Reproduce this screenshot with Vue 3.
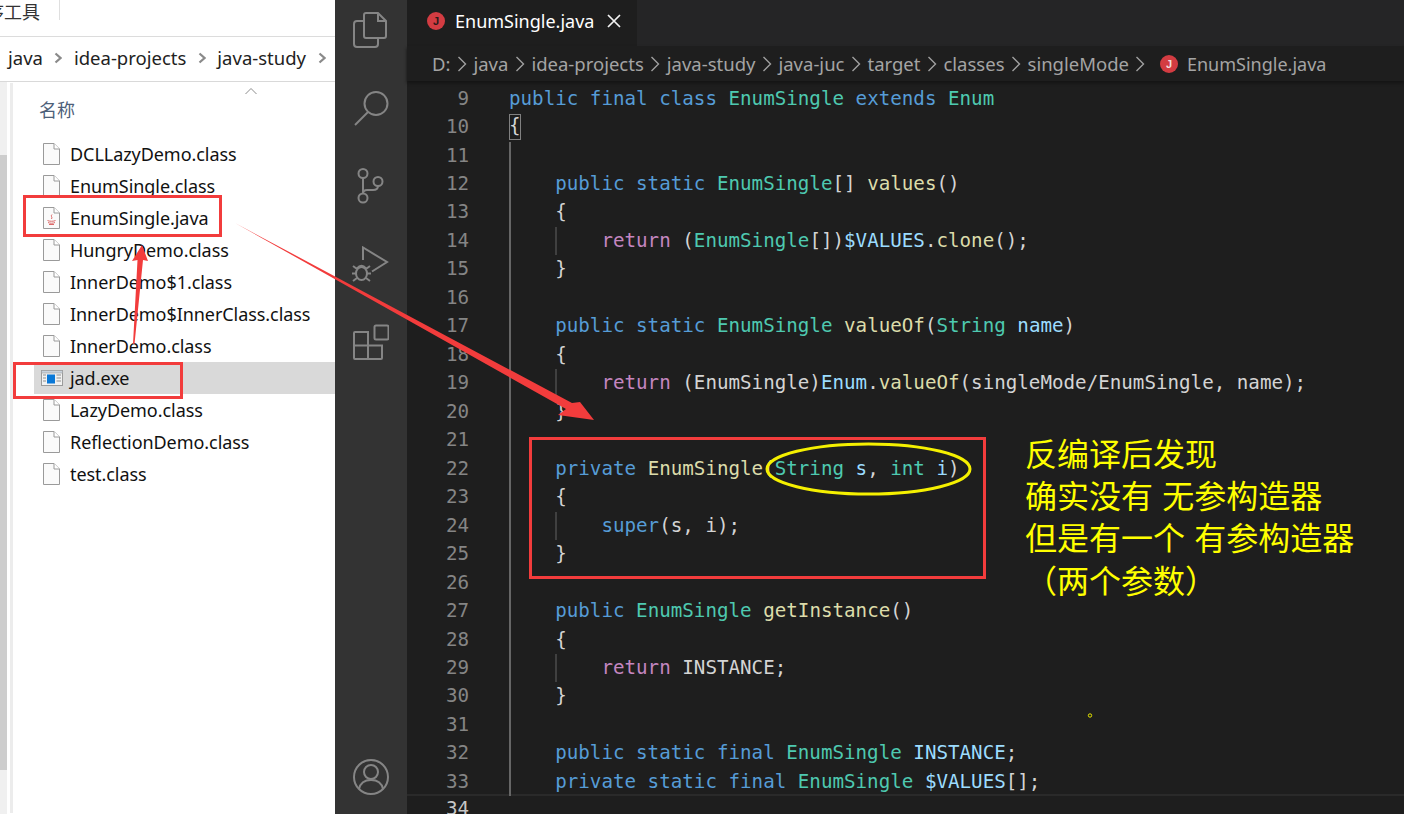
<script setup>
const files = [
  { name: 'DCLLazyDemo.class', icon: 'file' },
  { name: 'EnumSingle.class', icon: 'file' },
  { name: 'EnumSingle.java', icon: 'java' },
  { name: 'HungryDemo.class', icon: 'file' },
  { name: 'InnerDemo$1.class', icon: 'file' },
  { name: 'InnerDemo$InnerClass.class', icon: 'file' },
  { name: 'InnerDemo.class', icon: 'file' },
  { name: 'jad.exe', icon: 'exe', selected: true },
  { name: 'LazyDemo.class', icon: 'file' },
  { name: 'ReflectionDemo.class', icon: 'file' },
  { name: 'test.class', icon: 'file' }
]
const crumbsLeft = ['java', 'idea-projects', 'java-study']
const crumbsRight = ['D:', 'java', 'idea-projects', 'java-study', 'java-juc', 'target', 'classes', 'singleMode']

const k = 'k', g = 'g', y = 'y', v = 'v', p = 'p', w = 'w'
const pub = (s) => [k, s]
const E = [g, 'EnumSingle']
const lines = [
  { n: 9, guide: 0, t: [pub('public final class '), E, pub(' extends '), [g, 'Enum']] },
  { n: 10, guide: 0, box: true, t: [[w, '{']] },
  { n: 11, guide: 1, t: [] },
  { n: 12, guide: 1, t: [pub('    public static '), E, [w, '[] '], [y, 'values'], [w, '()']] },
  { n: 13, guide: 1, t: [[w, '    {']] },
  { n: 14, guide: 2, t: [[p, '        return '], [w, '('], E, [w, '[])'], [v, '$VALUES'], [w, '.'], [y, 'clone'], [w, '();']] },
  { n: 15, guide: 1, t: [[w, '    }']] },
  { n: 16, guide: 1, t: [] },
  { n: 17, guide: 1, t: [pub('    public static '), E, [w, ' '], [y, 'valueOf'], [w, '('], [g, 'String'], [w, ' '], [v, 'name'], [w, ')']] },
  { n: 18, guide: 1, t: [[w, '    {']] },
  { n: 19, guide: 2, t: [[p, '        return '], [w, '(EnumSingle)'], [v, 'Enum'], [w, '.'], [y, 'valueOf'], [w, '(singleMode/EnumSingle, name);']] },
  { n: 20, guide: 1, t: [[w, '    }']] },
  { n: 21, guide: 1, t: [] },
  { n: 22, guide: 1, t: [pub('    private '), [y, 'EnumSingle'], [w, '('], [g, 'String'], [w, ' '], [v, 's'], [w, ', '], [g, 'int'], [w, ' '], [v, 'i'], [w, ')']] },
  { n: 23, guide: 1, t: [[w, '    {']] },
  { n: 24, guide: 2, t: [pub('        super'), [w, '(s, i);']] },
  { n: 25, guide: 1, t: [[w, '    }']] },
  { n: 26, guide: 1, t: [] },
  { n: 27, guide: 1, t: [pub('    public '), E, [w, ' '], [y, 'getInstance'], [w, '()']] },
  { n: 28, guide: 1, t: [[w, '    {']] },
  { n: 29, guide: 2, t: [[p, '        return '], [w, 'INSTANCE;']] },
  { n: 30, guide: 1, t: [[w, '    }']] },
  { n: 31, guide: 1, t: [] },
  { n: 32, guide: 1, t: [pub('    public static final '), E, [w, ' '], [v, 'INSTANCE'], [w, ';']] },
  { n: 33, guide: 1, t: [pub('    private static final '), E, [w, ' '], [v, '$VALUES'], [w, '[];']] },
  { n: 34, guide: 0, current: true, t: [] }
]
</script>

<template>
  <div class="screen">
    <section class="explorer">
      <div class="ribbon">
        <span class="ribbon-label">序工具</span>
        <span class="ribbon-sep"></span>
      </div>
      <nav class="path">
        <template v-for="c in crumbsLeft" :key="c">
          <span class="path-item">{{ c }}</span>
          <svg class="path-chev" width="8" height="12" viewBox="0 0 8 12"><path d="M1.5 1.5 6.5 6 1.5 10.5" fill="none" stroke="#8a8a8a" stroke-width="2.2" /></svg>
        </template>
      </nav>
      <div class="explorer-body">
        <aside class="tree"><div class="tree-thumb"></div></aside>
        <div class="list">
          <svg class="sort" width="14" height="8" viewBox="0 0 14 8"><path d="M1.5 7 7 1.5 12.5 7" fill="none" stroke="#8c8c8c" stroke-width="1" /></svg>
          <div class="list-head">名称</div>
          <div v-for="f in files" :key="f.name" class="row" :class="{ selected: f.selected }">
            <svg v-if="f.icon !== 'exe'" class="ficon" width="17" height="22" viewBox="0 0 17 22">
              <path d="M.5.5H11L16.5 6V21.5H.5Z" fill="#fafafa" stroke="#9a9a9a" />
              <path d="M11 .5V6H16.5" fill="#fff" stroke="#9a9a9a" />
              <g v-if="f.icon === 'java'" fill="none" stroke="#dd6a6a" stroke-width="1">
                <path d="M9 7.5C7 9.5 10 10 8.5 12" />
                <path d="M4.5 13.5C6 14.5 11 14.5 12.5 13.5M5 15.5C7 16.5 10 16.5 12 15.5M6 17.5H11" />
              </g>
            </svg>
            <svg v-else class="ficon exe" width="22" height="16" viewBox="0 0 22 16">
              <rect x=".5" y=".5" width="21" height="15" fill="#f1f1f1" stroke="#9b9b9b" />
              <rect x=".5" y=".5" width="21" height="2.5" fill="#c9d2dc" stroke="#9b9b9b" stroke-width=".6" />
              <rect x="6" y="4.5" width="8" height="9" fill="#0a78d7" />
              <path d="M2 5H5M2 8H5M2 11H5M15.5 5H20M15.5 8H20M15.5 11H20" stroke="#8f8f8f" />
            </svg>
            <span class="fname">{{ f.name }}</span>
          </div>
        </div>
      </div>
    </section>

    <aside class="activity">
      <svg class="aicon" width="36" height="36" viewBox="0 0 36 36">
        <path d="M13 1H25L33 9V24Q33 26 31 26H13Q11 26 11 24V3Q11 1 13 1Z" />
        <path d="M25 1V9H33" />
        <path d="M11 9H4Q1 9 1 12V32Q1 35 4 35H22Q25 35 25 32V26" />
      </svg>
      <svg class="aicon" width="36" height="36" viewBox="0 0 36 36">
        <circle cx="23" cy="13.5" r="11.5" />
        <path d="M15 22 2 35" />
      </svg>
      <svg class="aicon" width="36" height="36" viewBox="0 0 36 36">
        <circle cx="10" cy="5.5" r="4.5" />
        <circle cx="25" cy="13.5" r="4.5" />
        <circle cx="10" cy="30" r="4.5" />
        <path d="M10 10V25.5" />
        <path d="M25 18Q25 22 20 22H14Q10 22 10 25.5" />
      </svg>
      <svg class="aicon debug" width="38" height="40" viewBox="0 0 38 40">
        <path d="M11 14V1.5L35 16 20 25.5" />
        <ellipse cx="9.5" cy="27.5" rx="5.5" ry="6.5" />
        <path d="M5 22.5Q9.5 17 14 22.5M1 20 5 23M18 20 14 23M0 27.5H4M15 27.5H19M1 35 5 32M18 35 14 32" />
      </svg>
      <svg class="aicon" width="36" height="36" viewBox="0 0 36 36">
        <rect x="21.5" y="1.5" width="14" height="14" rx="1.5" />
        <path d="M2 8H15V35H2Q1 35 1 34V9Q1 8 2 8Z" />
        <path d="M1 21.5H29V34Q29 35 28 35H15" />
      </svg>
      <svg class="aicon account" width="36" height="36" viewBox="0 0 36 36">
        <circle cx="18" cy="18" r="17" />
        <circle cx="18" cy="13" r="7" />
        <path d="M6 30Q8 21 18 21T30 30" />
      </svg>
    </aside>

    <main class="editor">
      <div class="tabbar">
        <div class="tab">
          <span class="jbadge dark">J</span>
          <span class="tab-name">EnumSingle.java</span>
          <svg class="tab-close" width="14" height="14" viewBox="0 0 14 14"><path d="M1 1 13 13M13 1 1 13" stroke="#f2f2f2" stroke-width="1.7" /></svg>
        </div>
      </div>
      <nav class="crumbs">
        <template v-for="c in crumbsRight" :key="c">
          <span class="crumb">{{ c }}</span>
          <svg class="crumb-chev" width="10" height="18" viewBox="0 0 10 18"><path d="M1.5 2 8.5 9 1.5 16" fill="none" stroke="#a0a0a0" stroke-width="1.4" /></svg>
        </template>
        <span class="jbadge small">J</span>
        <span class="crumb last">EnumSingle.java</span>
      </nav>
      <div class="code">
        <div v-for="l in lines" :key="l.n" class="line" :class="{ current: l.current }">
          <span class="num">{{ l.n }}</span>
          <span class="src" :class="'guide' + l.guide">
            <span v-if="l.box" class="bracket">{</span>
            <template v-else><span v-for="(tok, i) in l.t" :key="i" :class="tok[0]">{{ tok[1] }}</span></template>
          </span>
        </div>
      </div>
    </main>

    <svg class="marks" width="1404" height="814" viewBox="0 0 1404 814">
      <g fill="none" stroke="#f23c3c" stroke-width="3">
        <rect x="24.5" y="196.5" width="196" height="39" />
        <rect x="14.5" y="363.5" width="167" height="34" />
        <rect x="530.5" y="438.5" width="454" height="139" />
      </g>
      <g fill="#f23c3c">
        <polygon points="235,223 572,403 580,402 594,420 558,415 566,409" />
        <polygon points="133,344 137.5,260 132,261 142,245 148,261 143,260 134.5,344" />
      </g>
      <ellipse cx="868.5" cy="469" rx="101.5" ry="25" fill="none" stroke="#f5f000" stroke-width="3" />
      <circle cx="1090" cy="715.5" r="1.7" fill="none" stroke="#e6e600" />
    </svg>
    <div class="note">
      <div>反编译后发现</div>
      <div>确实没有 无参构造器</div>
      <div>但是有一个 有参构造器</div>
      <div>（两个参数）</div>
    </div>
  </div>
</template>

<style scoped>
.screen {
  position: relative;
  display: flex;
  width: 1404px;
  height: 814px;
  overflow: hidden;
  font-family: "Noto Sans", "Noto Sans CJK SC", sans-serif;
}
.explorer {
  display: flex;
  flex-direction: column;
  width: 335px;
  flex: none;
  background: #fff;
  color: #1a1a1a;
}
.ribbon {
  display: flex;
  align-items: flex-start;
  height: 36px;
  overflow: hidden;
  border-bottom: 1px solid #dcdcdc;
  box-sizing: content-box;
}
.ribbon-label {
  margin: -3px 0 0 -14px;
  font-size: 18px;
  line-height: 28px;
  color: #333;
  font-family: "Noto Sans CJK SC", sans-serif;
}
.ribbon-sep {
  width: 1px;
  height: 20px;
  margin-left: 19px;
  background: #dfdfdf;
}
.path {
  display: flex;
  align-items: center;
  height: 45px;
  padding: 0 0 3px 8px;
  box-sizing: border-box;
  border-bottom: 1px solid #d9d9d9;
  font-size: 18.5px;
}
.path-item { white-space: nowrap; color: #222; }
.path-chev { margin: 0 11.5px; flex: none; }
.explorer-body { display: flex; flex: 1; min-height: 0; }
.tree {
  width: 7px;
  flex: none;
  background: #f0f0f0;
  border-right: 3px solid #fff;
  box-shadow: 4px 0 0 -1px #ececec;
}
.tree-thumb { height: 615px; margin-top: 73px; background: #cdcdcd; }
.list { position: relative; flex: 1; margin-left: 24px; }
.sort { position: absolute; left: 210px; top: 5px; }
.list-head {
  height: 56px;
  padding: 13px 0 0 5px;
  box-sizing: border-box;
  font-size: 18px;
  line-height: 28px;
  color: #4d6079;
  font-family: "Noto Sans CJK SC", sans-serif;
}
.row {
  display: flex;
  align-items: center;
  height: 32px;
  padding-left: 9px;
  font-size: 18px;
  letter-spacing: -.06px;
  white-space: nowrap;
}
.row.selected { background: #d9d9d9; }
.ficon { flex: none; }
.ficon.exe { margin-left: -2px; margin-right: 7px; }
.fname { margin-left: 10px; color: #111; }
.exe + .fname { margin-left: 0; }

.activity {
  display: flex;
  flex-direction: column;
  align-items: center;
  gap: 42px;
  width: 72px;
  flex: none;
  box-sizing: border-box;
  padding: 12px 0 19px;
  background: #333;
}
.aicon { fill: none; stroke: #858585; stroke-width: 2; flex: none; }
.debug { margin-bottom: -4px; }
.account { margin-top: auto; }

.editor {
  display: flex;
  flex-direction: column;
  flex: 1;
  min-width: 0;
  background: #1e1e1e;
}
.tabbar { display: flex; height: 46px; background: #252526; flex: none; }
.tab {
  display: flex;
  align-items: center;
  width: 230px;
  padding: 0 0 4px 20px;
  box-sizing: border-box;
  background: #1e1e1e;
}
.tab-name { margin-left: 10px; font-size: 18px; color: #fff; white-space: nowrap; }
.tab-close { margin-left: 13px; flex: none; }
.jbadge {
  display: flex;
  align-items: center;
  justify-content: center;
  width: 18px;
  height: 18px;
  flex: none;
  border-radius: 50%;
  background: #d33c42;
  font: 700 11px "Liberation Sans", sans-serif;
}
.jbadge.dark { color: #2a1a1a; }
.jbadge.small { margin: 0 9px 0 8px; color: #f2dede; }
.crumbs {
  display: flex;
  align-items: center;
  height: 35px;
  padding-left: 25px;
  flex: none;
  background: #1e1e1e;
  box-shadow: 0 2px 3px #141414;
  position: relative;
  font-size: 18.5px;
  color: #a4a4a4;
}
.crumb { white-space: nowrap; }
.crumb.last { font-size: 18px; }
.crumb-chev { margin: 0 6.5px; flex: none; }
.code {
  flex: 1;
  min-height: 0;
  padding-top: 3.6px;
  overflow: hidden;
  font-family: "DejaVu Sans Mono", monospace;
  font-size: 19.2px;
}
.line { display: flex; height: 28.47px; line-height: 28.47px; white-space: pre; }
.line.current { margin-top: -2px; border-top: 2px solid #2a2a2a; box-sizing: border-box; line-height: 26px; }
.num {
  width: 62px;
  margin-right: 40px;
  flex: none;
  text-align: right;
  color: #858585;
}
.current .num { color: #c6c6c6; }
.src { flex: 1; }
.guide1 { background: linear-gradient(#666, #666) 0 0 / 2px 100% no-repeat; }
.guide2 {
  background:
    linear-gradient(#666, #666) 0 0 / 2px 100% no-repeat,
    linear-gradient(#404040, #404040) 46px 0 / 2px 100% no-repeat;
}
.bracket { display: inline-block; height: 26px; line-height: 24px; margin-top: 1px; box-sizing: border-box; outline: 1px solid #808080; outline-offset: -1px; color: #d4d4d4; vertical-align: top; }
.k { color: #569cd6; }
.g { color: #4ec9b0; }
.y { color: #dcdcaa; }
.v { color: #9cdcfe; }
.p { color: #c586c0; }
.w { color: #d4d4d4; }

.marks { position: absolute; left: 0; top: 0; pointer-events: none; }
.note {
  position: absolute;
  left: 1025px;
  top: 430.5px;
  font-family: "Noto Sans CJK SC", sans-serif;
  font-size: 32px;
  word-spacing: 2px;
  line-height: 42.4px;
  color: #ffff00;
  white-space: pre;
}
</style>

<style>
html, body { margin: 0; background: #fff; }
</style>
